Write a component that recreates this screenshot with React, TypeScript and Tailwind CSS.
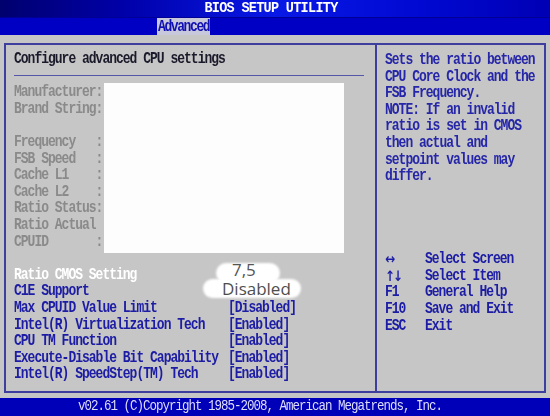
import React from 'react'

const mono = "font-['Liberation_Mono',monospace] font-bold text-[13px] tracking-[-1px] leading-[16.6px] whitespace-pre scale-y-[1.2]"

const cpuInfo = [
  'Manufacturer:',
  'Brand String:',
  '',
  'Frequency   :',
  'FSB Speed   :',
  'Cache L1    :',
  'Cache L2    :',
  'Ratio Status:',
  'Ratio Actual',
  'CPUID       :',
  '',
]

const options: [string, string][] = [
  ['C1E Support', ''],
  ['Max CPUID Value Limit', '[Disabled]'],
  ['Intel(R) Virtualization Tech', '[Enabled]'],
  ['CPU TM Function', '[Enabled]'],
  ['Execute-Disable Bit Capability', '[Enabled]'],
  ['Intel(R) SpeedStep(TM) Tech', '[Enabled]'],
]

const help = [
  'Sets the ratio between',
  'CPU Core Clock and the',
  'FSB Frequency.',
  'NOTE: If an invalid',
  'ratio is set in CMOS',
  'then actual and',
  'setpoint values may',
  'differ.',
]

const keys: [string, string, boolean][] = [
  ['↔', 'Select Screen', true],
  ['↑↓', 'Select Item', true],
  ['F1', 'General Help', false],
  ['F10', 'Save and Exit', false],
  ['ESC', 'Exit', false],
]

export default function App() {
  return (
    <div className="relative w-[550px] h-[416px] flex flex-col bg-[#c6c6c6] overflow-hidden">
      {/* title bar */}
      <div className="h-[17px] flex items-center justify-center bg-[linear-gradient(90deg,#00006e_0%,#0000a8_22%,#0818e6_50%,#0008d0_78%,#0000b4_100%)]">
        <span className="font-['Liberation_Mono',monospace] font-bold text-[13.5px] tracking-[-0.7px] leading-[12px] whitespace-pre scale-y-[1.12] text-white pr-[8px]">
          BIOS SETUP UTILITY
        </span>
      </div>

      {/* tab row */}
      <div className="h-[18px] flex bg-[#0000c4] border-t border-[#000094] pl-[157px]">
        <div className="h-full flex items-center px-[1px] bg-[#c8c8dc]">
          <span className="font-['Liberation_Mono',monospace] font-bold text-[13px] tracking-[-1.4px] leading-[13px] scale-y-[1.2] text-[#1010b4]">
            Advanced
          </span>
        </div>
      </div>

      {/* main panel */}
      <div className="flex-1 pt-[8px] px-[4px] pb-[5px]">
        <div className="h-full flex border-2 border-[#3e3e9e]">
          <div className="relative w-[369px] pt-[6px] pl-[8px] pr-[11px]">
            <div className={`${mono} text-[#1a1a2a]`}>Configure advanced CPU settings</div>
            <div className="h-[16.6px] flex items-center">
              <div className="w-full border-t border-[#5656a8]" />
            </div>
            {cpuInfo.map((label, i) => (
              <div key={i} className={`${mono} h-[16.6px] text-[#8a8a8a]`}>{label}</div>
            ))}
            <div className={`${mono} text-white`}>Ratio CMOS Setting</div>
            {options.map(([label, value]) => (
              <div key={label} className={`${mono} flex text-[#1c1ca4]`}>
                <span className="w-[214px]">{label}</span>
                <span>{value}</span>
              </div>
            ))}
            {/* blanked-out processor details */}
            <div className="absolute left-[98px] top-[38px] w-[240px] h-[170px] bg-[#fdfdfd]" />
          </div>

          <div className="flex-1 border-l-2 border-[#3e3e9e] pt-[7px] pl-[8px]">
            {help.map((line) => (
              <div key={line} className={`${mono} text-[#2626a8]`}>{line}</div>
            ))}
            <div className="h-[66.4px]" />
            {keys.map(([key, desc, arrow]) => (
              <div key={desc} className={`${mono} flex text-[#1c1ca4]`}>
                <span
                  className={
                    arrow
                      ? "inline-block w-[40px] h-[16.6px] font-['DejaVu_Sans',sans-serif] text-[12px] tracking-[-2px] leading-[16.6px] overflow-hidden"
                      : 'w-[40px]'
                  }
                >
                  {key}
                </span>
                <span>{desc}</span>
              </div>
            ))}
          </div>
        </div>
      </div>

      {/* footer */}
      <div className="h-[18px] flex items-center bg-[#0000b8] pl-[78px]">
        <span className="font-['Liberation_Mono',monospace] text-[12.5px] tracking-[-1px] leading-[13px] text-[#dcdcfa] whitespace-pre scale-y-[1.15]">
          v02.61 (C)Copyright 1985-2008, American Megatrends, Inc.
        </span>
      </div>

      {/* hand-written values over the current settings */}
      <div className="absolute left-[216px] top-[263px] w-[64px] h-[20px] rounded-full bg-white blur-[1px]" />
      <div className="absolute left-[203px] top-[279px] w-[98px] h-[19px] rounded-full bg-white blur-[1px]" />
      <div className="absolute left-[232px] top-[262px] font-['Open_Sans',sans-serif] text-[17px] leading-[16px] text-[#555555]">7,5</div>
      <div className="absolute left-[222px] top-[280px] font-['Open_Sans',sans-serif] text-[17px] leading-[17px] text-[#4e4e4e]">Disabled</div>
    </div>
  )
}
